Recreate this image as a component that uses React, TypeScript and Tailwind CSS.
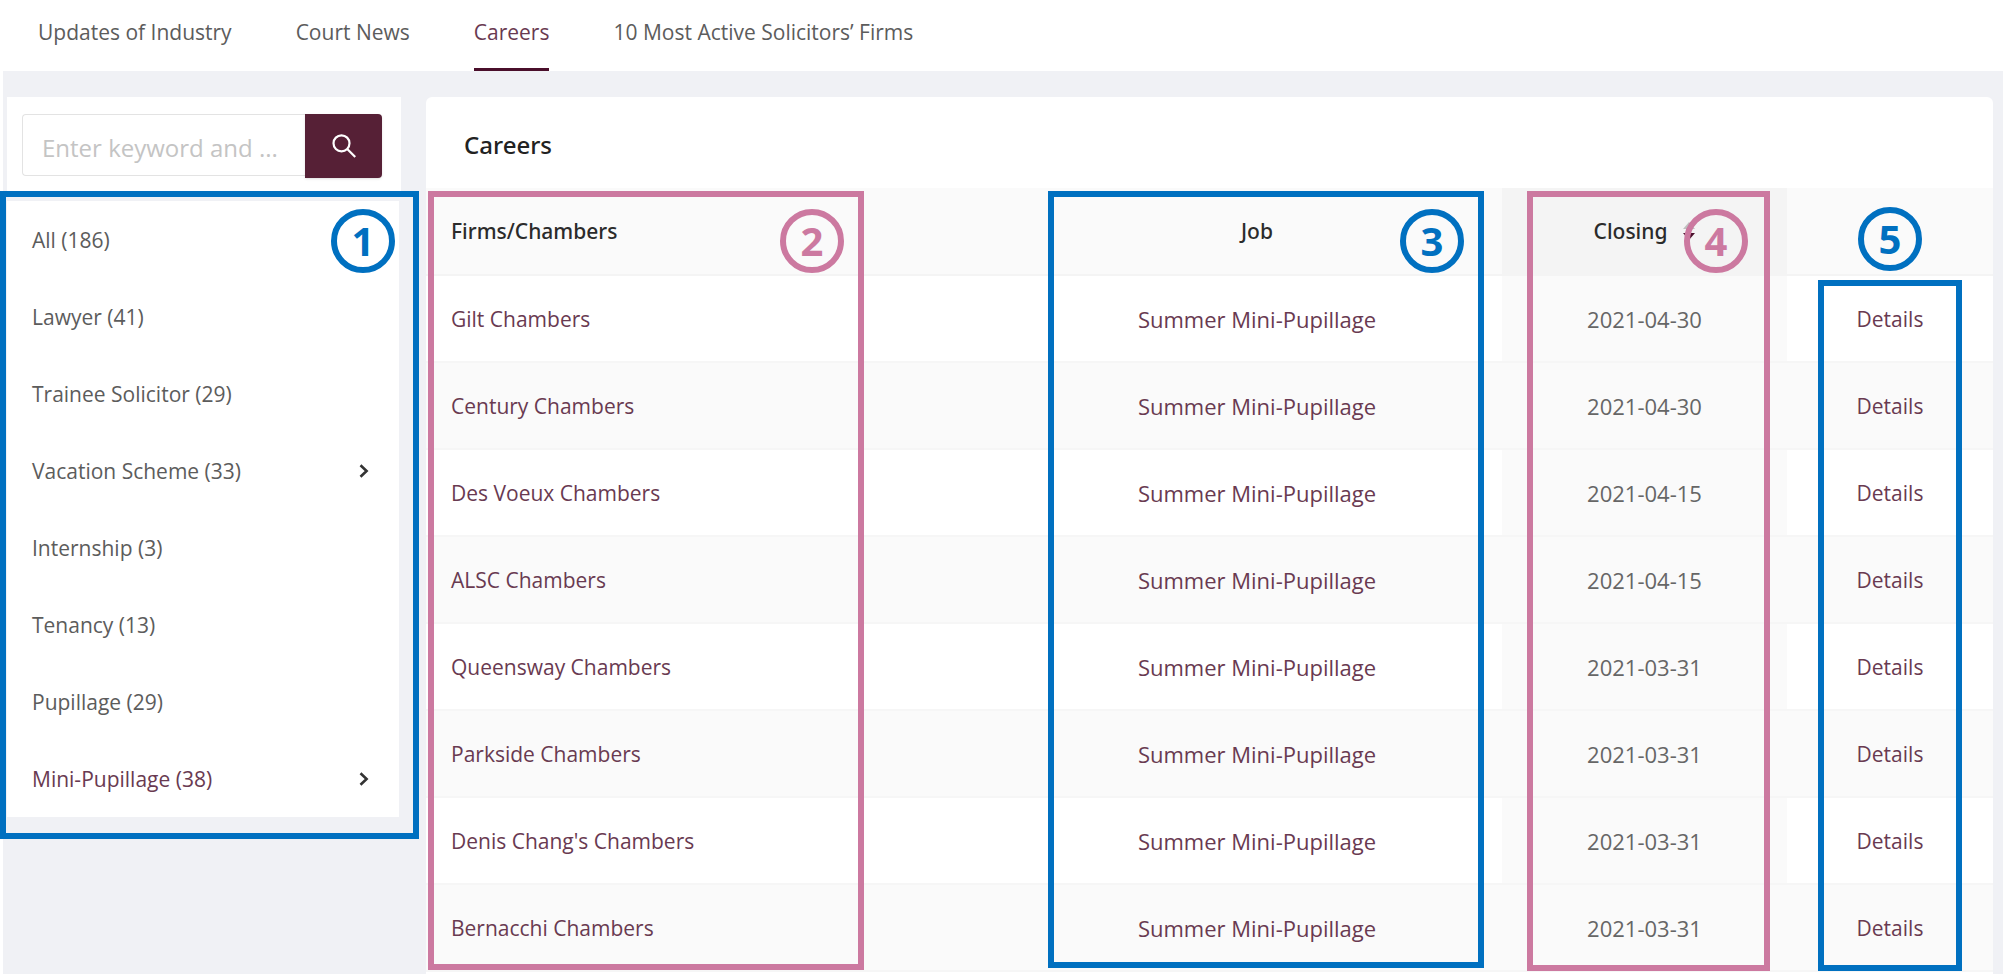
import clsx from "clsx";
import type { ReactNode } from "react";

const tabs = ["Updates of Industry", "Court News", "Careers", "10 Most Active Solicitors’ Firms"];

const categories = [
  { name: "All", count: 186 },
  { name: "Lawyer", count: 41 },
  { name: "Trainee Solicitor", count: 29 },
  { name: "Vacation Scheme", count: 33, nested: true },
  { name: "Internship", count: 3 },
  { name: "Tenancy", count: 13 },
  { name: "Pupillage", count: 29 },
  { name: "Mini-Pupillage", count: 38, nested: true },
];

const jobs = [
  { firm: "Gilt Chambers", closing: "2021-04-30" },
  { firm: "Century Chambers", closing: "2021-04-30" },
  { firm: "Des Voeux Chambers", closing: "2021-04-15" },
  { firm: "ALSC Chambers", closing: "2021-04-15" },
  { firm: "Queensway Chambers", closing: "2021-03-31" },
  { firm: "Parkside Chambers", closing: "2021-03-31" },
  { firm: "Denis Chang's Chambers", closing: "2021-03-31" },
  { firm: "Bernacchi Chambers", closing: "2021-03-31" },
];

const Marker = ({ n }: { n: number }) => (
  <span className="flex size-16 items-center justify-center rounded-full border-6 border-current text-[40px] leading-none font-bold">
    {n}
  </span>
);

// Numbered frame that is laid over a part of the page
const Outline = ({ className, children }: { className: string; children?: ReactNode }) => (
  <div
    className={clsx("pointer-events-none absolute flex items-start justify-end border-6 border-current pt-3", className)}
  >
    {children}
  </div>
);

const Chevron = () => (
  <svg width="10" height="14" viewBox="0 0 10 14" fill="none" stroke="#333" strokeWidth="2.6">
    <path d="M1.5 1.2 7.6 7l-6.1 5.8" />
  </svg>
);

const NavTabs = () => (
  <nav className="flex h-[71px] gap-16 bg-white pl-[38px]">
    {tabs.map((tab) => (
      <a
        key={tab}
        href="#"
        className={clsx(
          "flex items-center border-b-3 pb-1",
          tab === "Careers" ? "border-[#4a0f2b] text-[#693a51]" : "border-transparent"
        )}
      >
        {tab}
      </a>
    ))}
  </nav>
);

const Sidebar = () => (
  <aside className="relative w-[394px] shrink-0">
    <form className="mb-1 flex h-[100px] items-start bg-white pt-[17px] pr-[19px] pl-[15px]">
      <input
        type="text"
        aria-label="Keyword"
        placeholder="Enter keyword and ..."
        className="h-[62px] min-w-0 flex-1 rounded-l border border-r-0 border-[#e3e3e3] pt-1 pl-[19px] text-2xl outline-none placeholder:text-[#c4c4c4]"
      />
      <button
        type="submit"
        aria-label="Search"
        className="flex h-16 w-[77px] items-center justify-center rounded-r bg-[#562036] shadow-sm"
      >
        <svg width="24" height="24" viewBox="0 0 24 24" fill="none" stroke="#fff" strokeWidth="2.2">
          <circle cx="9.5" cy="9.3" r="8" />
          <path d="m15.2 15 8 8" />
        </svg>
      </button>
    </form>

    <ul className="mr-[2px] bg-white">
      {categories.map((c) => (
        <li key={c.name}>
          <a
            href="#"
            className={clsx(
              "flex h-[77px] items-center justify-between pr-[30px] pl-[25px]",
              c.name === "Mini-Pupillage" && "text-[#693a51]"
            )}
          >
            {c.name} ({c.count})
            {c.nested && <Chevron />}
          </a>
        </li>
      ))}
    </ul>

    <Outline className="top-[94px] -right-[18px] -left-[7px] h-[648px] pr-[18px] text-[#0070c0]">
      <Marker n={1} />
    </Outline>
  </aside>
);

const JobTable = () => (
  <table className="w-full table-fixed border-collapse text-center">
    <thead>
      <tr className="h-[87px] border-b-2 border-[#f4f4f4] bg-[#fafafa] font-['Noto_Sans',sans-serif] text-[#2b2b2b]">
        <th className="pl-[25px] text-left font-medium">Firms/Chambers</th>
        <th className="w-[490px] font-medium">Job</th>
        <th className="w-[285px] bg-[#f4f4f4] font-medium">
          <button type="button" className="inline-flex items-center gap-4">
            Closing
            <svg width="12" height="18" viewBox="0 0 12 18">
              <path d="M6 0l6 7H0z" fill="#bfbfbf" />
              <path d="M0 11h12l-6 7z" fill="#4a0f2b" />
            </svg>
          </button>
        </th>
        <th className="w-[206px] text-[#0070c0]">
          <div className="flex justify-center pt-4">
            <Marker n={5} />
          </div>
        </th>
      </tr>
    </thead>
    <tbody>
      {jobs.map((job) => (
        <tr key={job.firm} className="h-[87px] border-b-2 border-[#f6f6f6] text-[#693a51] even:bg-[#fafafa]">
          <td className="pl-[25px] text-left">
            <a href="#">{job.firm}</a>
          </td>
          <td className="text-[22px]">
            <a href="#">Summer Mini-Pupillage</a>
          </td>
          <td className="bg-[#fafafa] text-[22px] text-[#666]">{job.closing}</td>
          <td>
            <a href="#">Details</a>
          </td>
        </tr>
      ))}
    </tbody>
  </table>
);

const App = () => {
  return (
    <div className="flex min-h-screen flex-col bg-white font-['Open_Sans','Noto_Sans',sans-serif] text-[21px] leading-8 text-[#5c5c5c]">
      <NavTabs />
      <div className="ml-[3px] flex flex-1 items-stretch gap-[25px] bg-[#f0f1f5] pt-[26px] pr-[10px] pl-1">
        <Sidebar />
        <main className="relative flex-1 rounded-t-md bg-white">
          <h1 className="flex h-[91px] items-center pt-1 pl-[38px] font-['Noto_Sans',sans-serif] text-2xl font-medium text-[#222]">
            Careers
          </h1>
          <JobTable />

          <Outline className="top-[94px] left-[2px] h-[779px] w-[436px] pr-[14px] text-[#cc79a0]">
            <Marker n={2} />
          </Outline>
          <Outline className="top-[94px] right-[509px] h-[777px] w-[436px] pr-[14px] text-[#0070c0]">
            <Marker n={3} />
          </Outline>
          <Outline className="top-[94px] right-[223px] h-[780px] w-[243px] pr-4 text-[#cc79a0]">
            <Marker n={4} />
          </Outline>
          <Outline className="top-[183px] right-[31px] h-[691px] w-36 text-[#0070c0]" />
        </main>
      </div>
    </div>
  );
};

export default App;
